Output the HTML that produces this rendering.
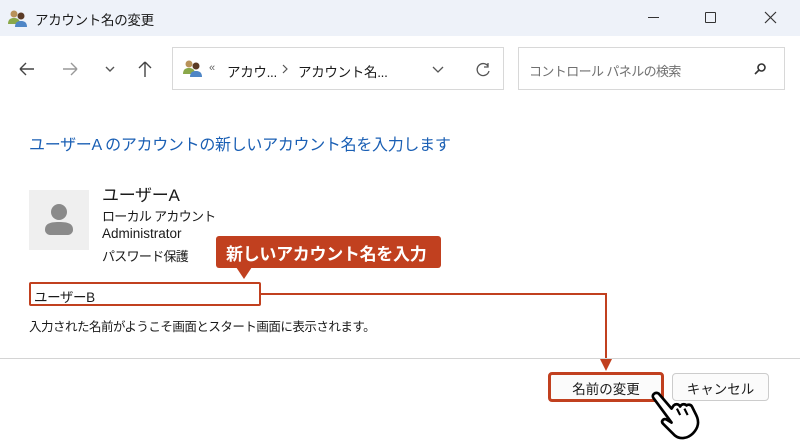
<!DOCTYPE html>
<html><head><meta charset="utf-8"><style>
*{margin:0;padding:0;box-sizing:border-box}
body{width:800px;height:448px;overflow:hidden;background:#fff;font-family:"Liberation Sans","Noto Sans CJK JP",sans-serif;color:#1a1a1a;position:relative}
.a{position:absolute;white-space:nowrap}
</style></head><body>
<div class="a" style="left:0;top:0;width:800px;height:36px;background:#eef2f9"></div>
<svg class="a" style="left:8px;top:9px" width="20" height="18" viewBox="0 0 20 18"><circle cx="6" cy="5" r="3.5" fill="#b8925a"/><path d="M0 15c0-5 3-6 6-6s6 1 6 6z" fill="#8aa84a"/><circle cx="13" cy="7" r="3.5" fill="#5a3a25"/><path d="M7 18c0-5 3-6 6-6s6 1 6 6z" fill="#4f86c6"/></svg>
<div class="a" style="left:35px;top:9px;font-size:13.5px;letter-spacing:-0.3px">アカウント名の変更</div>
<div class="a" style="left:648px;top:17px;width:11px;height:1px;background:#333"></div>
<div class="a" style="left:705px;top:12px;width:11px;height:11px;border:1.2px solid #333;border-radius:1px"></div>
<svg class="a" style="left:764px;top:11px" width="13" height="13" viewBox="0 0 13 13" stroke="#333" stroke-width="1.2"><path d="M1 1l11 11M12 1L1 12"/></svg>

<svg class="a" style="left:15px;top:58px" width="150" height="22" viewBox="0 0 150 22" fill="none" stroke-width="1.4"><path d="M5 11h14M5 11l6-6M5 11l6 6" stroke="#444"/><path d="M48 11h14M62 11l-6-6M62 11l-6 6" stroke="#999"/><path d="M91 9l4 4 4-4" stroke="#555"/><path d="M130 4v15M130 4l-6 6M130 4l6 6" stroke="#444"/></svg>
<div class="a" style="left:172px;top:47px;width:332px;height:43px;border:1px solid #d8d8d8"></div>
<svg class="a" style="left:183px;top:59px" width="20" height="18" viewBox="0 0 20 18"><circle cx="6" cy="5" r="3.5" fill="#b8925a"/><path d="M0 15c0-5 3-6 6-6s6 1 6 6z" fill="#8aa84a"/><circle cx="13" cy="7" r="3.5" fill="#5a3a25"/><path d="M7 18c0-5 3-6 6-6s6 1 6 6z" fill="#4f86c6"/></svg>
<div class="a" style="left:209px;top:62px;font-size:11px;color:#666">«</div>
<div class="a" style="left:227px;top:61px;font-size:13.5px;letter-spacing:-0.3px">アカウ...</div>
<svg class="a" style="left:281px;top:64px" width="8" height="10" viewBox="0 0 8 10" fill="none" stroke="#555" stroke-width="1.2"><path d="M2 1l4 4-4 4"/></svg>
<div class="a" style="left:298px;top:61px;font-size:13.5px;letter-spacing:-0.3px">アカウント名...</div>
<svg class="a" style="left:432px;top:62px" width="60" height="16" viewBox="0 0 60 16" fill="none" stroke="#555" stroke-width="1.3"><path d="M1 5l5 5 5-5"/><path d="M56 4a6 6 0 1 0 1 5M56 1v4h-4"/></svg>
<div class="a" style="left:518px;top:47px;width:267px;height:43px;border:1px solid #d8d8d8"></div>
<div class="a" style="left:529px;top:61px;font-size:13px;letter-spacing:-0.6px;color:#707070">コントロール パネルの検索</div>
<svg class="a" style="left:752px;top:61px" width="16" height="16" viewBox="0 0 16 16" fill="none" stroke="#333" stroke-width="1.6"><circle cx="9.5" cy="6.5" r="3.5"/><path d="M7 9l-4 4"/></svg>

<div class="a" style="left:29px;top:131px;font-size:16px;letter-spacing:-0.3px;color:#1a5fb4">ユーザーA のアカウントの新しいアカウント名を入力します</div>
<div class="a" style="left:29px;top:190px;width:60px;height:60px;background:#efefef"></div>
<svg class="a" style="left:44px;top:200px" width="30" height="40" viewBox="0 0 30 40"><circle cx="15" cy="12" r="8" fill="#8a8a8a"/><path d="M1 30c0-6 4-8 14-8s14 2 14 8c0 3-3 5-5 5H6c-2 0-5-2-5-5z" fill="#8a8a8a"/></svg>
<div class="a" style="left:102px;top:181px;font-size:17px;letter-spacing:-0.3px">ユーザーA</div>
<div class="a" style="left:102px;top:206px;font-size:13px;letter-spacing:-0.7px">ローカル アカウント</div>
<div class="a" style="left:102px;top:226px;font-size:13.5px">Administrator</div>
<div class="a" style="left:102px;top:246px;font-size:13px;letter-spacing:-0.7px">パスワード保護</div>

<div class="a" style="left:216px;top:236px;width:225px;height:32px;background:#c1401f;border-radius:3px;color:#fff;font-size:17px;font-weight:bold;padding:4px 0 0 10px;letter-spacing:-0.3px">新しいアカウント名を入力</div>
<div class="a" style="left:236px;top:267px;width:0;height:0;border-left:8px solid transparent;border-right:8px solid transparent;border-top:12px solid #c1401f"></div>
<div class="a" style="left:29px;top:282px;width:232px;height:24px;border:2px solid #c1401f;border-radius:2px;font-size:13.5px;padding:2px 0 0 3px;letter-spacing:-0.4px">ユーザーB</div>
<div class="a" style="left:261px;top:293px;width:346px;height:2px;background:#c1401f"></div>
<div class="a" style="left:605px;top:293px;width:2px;height:68px;background:#c1401f"></div>
<div class="a" style="left:600px;top:359px;width:0;height:0;border-left:6px solid transparent;border-right:6px solid transparent;border-top:12px solid #c1401f"></div>
<div class="a" style="left:29px;top:316px;font-size:12.5px;letter-spacing:-0.5px">入力された名前がようこそ画面とスタート画面に表示されます。</div>
<div class="a" style="left:0;top:358px;width:800px;height:1px;background:#d4d4d4"></div>
<div class="a" style="left:548px;top:372px;width:116px;height:30px;border:3px solid #c1401f;border-radius:4px;background:#fbfbfb;font-size:13.5px;text-align:center;padding-top:3px">名前の変更</div>
<div class="a" style="left:672px;top:373px;width:97px;height:28px;border:1px solid #ccc;border-radius:4px;background:#fbfbfb;font-size:13.5px;text-align:center;padding-top:4px">キャンセル</div>
<svg class="a" style="left:648px;top:384px" width="60" height="60" viewBox="0 0 56 54"><path d="M5 12c-2-3 2-6 5-4l12 14 2-3c2-2 5-1 6 1 1-2 4-3 6-1 1-1 4-1 5 1l4 8c3 6 2 12-3 17s-12 6-17 2L14 36c-2-2 0-5 3-4l5 3z" fill="#fff" stroke="#000" stroke-width="2.5" stroke-linejoin="round"/><path d="M27 22l3 6M34 22l3 6" stroke="#000" stroke-width="2"/></svg>
</body></html>
